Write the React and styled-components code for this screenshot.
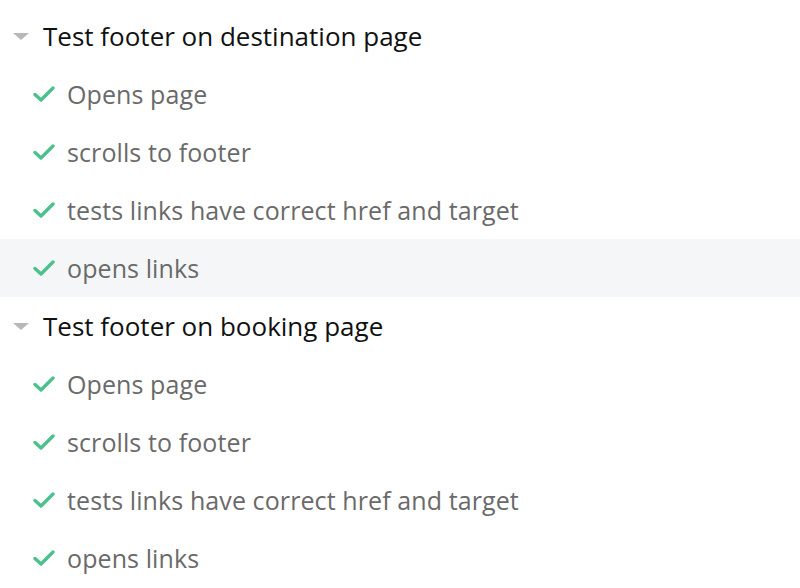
import React from 'react';
import styled, { createGlobalStyle } from 'styled-components';

const GlobalStyle = createGlobalStyle`
  body {
    margin: 0;
    background: #fff;
    font-family: 'Open Sans', 'Lato', sans-serif;
  }
`;

const List = styled.div`
  padding-top: 7px;
  display: flex;
  flex-direction: column;
`;

const SuiteRow = styled.div`
  display: flex;
  align-items: center;
  height: 58px;
  padding-left: 13px;
  gap: 14px;
  color: #111;
  font-size: 26px;
  font-weight: 500;
`;

const Caret = styled.span`
  width: 0;
  height: 0;
  border-left: 8px solid transparent;
  border-right: 8px solid transparent;
  border-top: 7px solid #b8b8b8;
`;

const TestRow = styled.div`
  display: flex;
  align-items: center;
  height: 58px;
  padding-left: 33px;
  gap: 12px;
  color: #6a6a6a;
  font-size: 25px;
  letter-spacing: 0.1px;
  background: ${(p) => (p.$active ? '#f5f6f8' : 'transparent')};
`;

const Check = () => (
  <svg width="22" height="18" viewBox="0 0 22 18">
    <path d="M2 9.5 L8 15 L20 3" fill="none" stroke="#4cc18d" strokeWidth="3.4" strokeLinecap="round" strokeLinejoin="round" />
  </svg>
);

const suites = [
  { title: 'Test footer on destination page', active: 3 },
  { title: 'Test footer on booking page', active: -1 },
];

const tests = ['Opens page', 'scrolls to footer', 'tests links have correct href and target', 'opens links'];

export default function App() {
  return (
    <>
      <GlobalStyle />
      <List>
        {suites.map((s) => (
          <React.Fragment key={s.title}>
            <SuiteRow>
              <Caret />
              {s.title}
            </SuiteRow>
            {tests.map((t, i) => (
              <TestRow key={t} $active={i === s.active}>
                <Check />
                {t}
              </TestRow>
            ))}
          </React.Fragment>
        ))}
      </List>
    </>
  );
}
